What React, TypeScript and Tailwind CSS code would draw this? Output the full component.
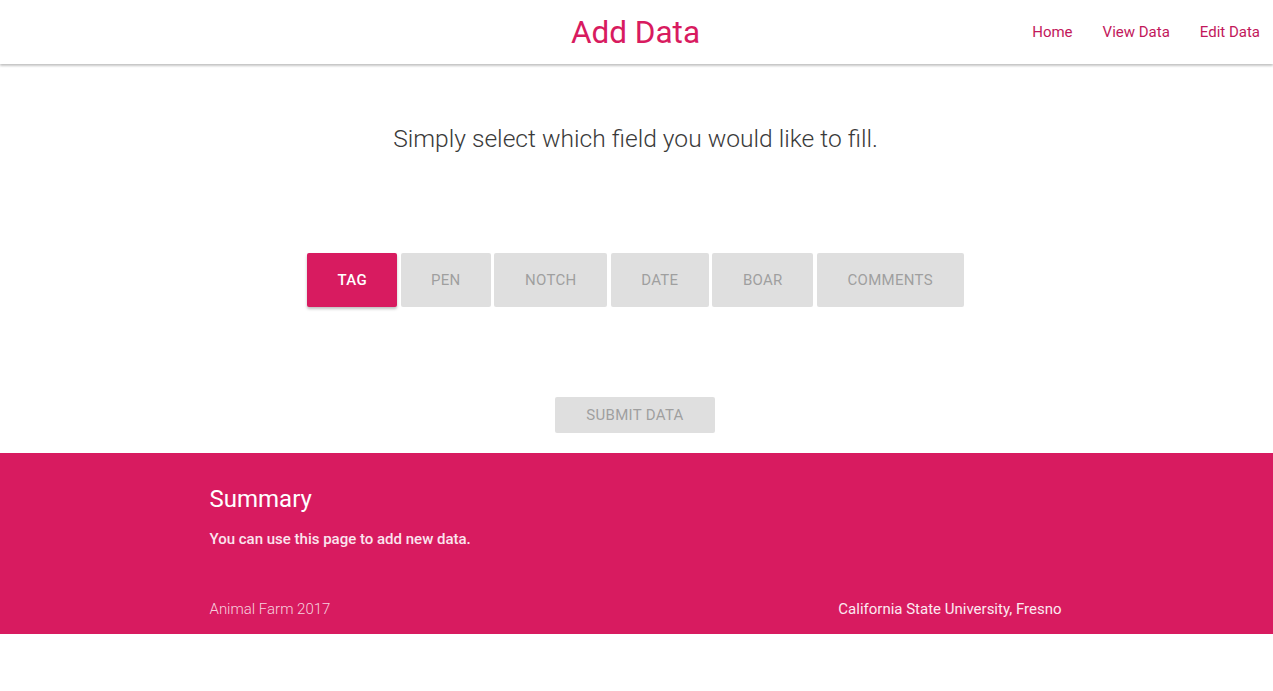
const fields = [
  { label: "TAG", w: "w-[90px]" },
  { label: "PEN", w: "w-[90px]" },
  { label: "NOTCH", w: "w-[113px]" },
  { label: "DATE", w: "w-[98px]" },
  { label: "BOAR", w: "w-[101px]" },
  { label: "COMMENTS", w: "w-[147px]" },
];

export default function App() {
  const active = "TAG";

  return (
    <div className="min-h-[691px] bg-white font-['Roboto',sans-serif]">
      {/* Nav */}
      <nav className="h-[64px] grid grid-cols-[1fr_auto_1fr] items-center bg-white shadow-[0_2px_2px_0_rgba(0,0,0,0.16),0_1px_3px_0_rgba(0,0,0,0.12)]">
        <div />
        <a className="text-[31.5px] text-[#d81b60] leading-none pt-[1px] -ml-[2px]">Add Data</a>
        <ul className="flex justify-end pr-[13px] text-[15px] text-[#c2185b]">
          <li className="px-[15px]">Home</li>
          <li className="px-[15px]">View Data</li>
          <li className="pl-[15px]">Edit Data</li>
        </ul>
      </nav>

      {/* Main */}
      <main className="flex flex-col items-center">
        <h5 className="mt-[59px] -ml-[2px] text-[24.6px] font-light text-[#3a3a3a] leading-[32px]">
          Simply select which field you would like to fill.
        </h5>

        <div className="mt-[98px] flex gap-[3.5px] -ml-[2px]">
          {fields.map((f) => (
            <button
              key={f.label}
              className={`${f.w} h-[54px] rounded-[2px] text-[15px] tracking-[0.3px] ${
                f.label === active
                  ? "bg-[#d81b60] text-white font-medium shadow-[0_2px_3px_0_rgba(0,0,0,0.25)]"
                  : "bg-[#dfdfdf] text-[#9f9f9f]"
              }`}
            >
              {f.label}
            </button>
          ))}
        </div>

        <button className="mt-[90px] -ml-[3px] w-[160px] h-[36px] rounded-[2px] bg-[#dfdfdf] text-[#9f9f9f] text-[15px] tracking-[0.3px]">
          SUBMIT DATA
        </button>
      </main>

      {/* Footer */}
      <footer className="mt-[20px] h-[181px] bg-[#d81b60] text-white">
        <div className="w-[852px] mx-auto pt-[31px] -translate-x-[1px]">
          <h5 className="text-[24px] leading-[30px]">Summary</h5>
          <p className="mt-[15px] text-[15px] font-medium leading-[20px] text-[#fbe4ee]">
            You can use this page to add new data.
          </p>
          <div className="mt-[50px] flex justify-between text-[15px] leading-[20px]">
            <span className="font-light text-[#f6d0de]">Animal Farm 2017</span>
            <span className="text-[#fce9f0]">California State University, Fresno</span>
          </div>
        </div>
      </footer>
    </div>
  );
}
